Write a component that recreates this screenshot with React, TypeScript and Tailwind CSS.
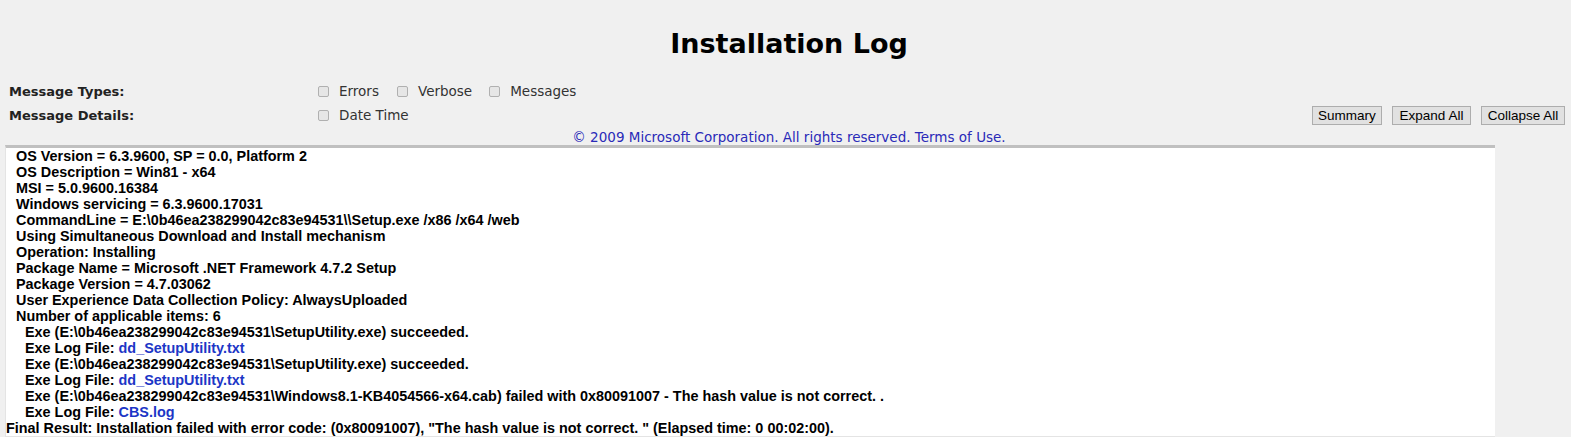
import React from "react";

const Box = ({ label, gapAfter = "" }: { label: string; gapAfter?: string }) => (
  <span className={`flex items-center ${gapAfter}`}>
    <span className="inline-block w-[11px] h-[11px] rounded-[2px] border border-[#b0b0b0] bg-[#e6e6e6] mr-[10px]" />
    <span className="text-[#333]">{label}</span>
  </span>
);

type Line = { level: number; text: string; link?: string };

const lines: Line[] = [
  { level: 1, text: "OS Version = 6.3.9600, SP = 0.0, Platform 2" },
  { level: 1, text: "OS Description = Win81 - x64" },
  { level: 1, text: "MSI = 5.0.9600.16384" },
  { level: 1, text: "Windows servicing = 6.3.9600.17031" },
  { level: 1, text: "CommandLine = E:\\0b46ea238299042c83e94531\\\\Setup.exe /x86 /x64 /web" },
  { level: 1, text: "Using Simultaneous Download and Install mechanism" },
  { level: 1, text: "Operation: Installing" },
  { level: 1, text: "Package Name = Microsoft .NET Framework 4.7.2 Setup" },
  { level: 1, text: "Package Version = 4.7.03062" },
  { level: 1, text: "User Experience Data Collection Policy: AlwaysUploaded" },
  { level: 1, text: "Number of applicable items: 6" },
  { level: 2, text: "Exe (E:\\0b46ea238299042c83e94531\\SetupUtility.exe) succeeded." },
  { level: 2, text: "Exe Log File: ", link: "dd_SetupUtility.txt" },
  { level: 2, text: "Exe (E:\\0b46ea238299042c83e94531\\SetupUtility.exe) succeeded." },
  { level: 2, text: "Exe Log File: ", link: "dd_SetupUtility.txt" },
  { level: 2, text: "Exe (E:\\0b46ea238299042c83e94531\\Windows8.1-KB4054566-x64.cab) failed with 0x80091007 - The hash value is not correct. ." },
  { level: 2, text: "Exe Log File: ", link: "CBS.log" },
  { level: 0, text: "Final Result: Installation failed with error code: (0x80091007), \"The hash value is not correct. \" (Elapsed time: 0 00:02:00)." },
];

export default function App() {
  return (
    <div className="w-[1571px] h-[437px] overflow-hidden bg-[#f0f0f0] font-['Verdana','DejaVu_Sans',sans-serif] text-[13.5px]">
      <h1 className="pt-[24px] pl-[7px] h-[80px] text-center text-[27px] leading-[40px] font-bold text-black">
        Installation Log
      </h1>
      <div className="flex h-[23px] items-center">
        <div className="w-[318px] pl-[9px] font-bold text-[13px] text-[#222]">Message Types:</div>
        <Box label="Errors" gapAfter="mr-[18px]" />
        <Box label="Verbose" gapAfter="mr-[17px]" />
        <Box label="Messages" />
      </div>
      <div className="flex h-[25px] items-center">
        <div className="w-[318px] pl-[9px] font-bold text-[13px] text-[#222]">Message Details:</div>
        <Box label="Date Time" />
        <div className="ml-auto mr-[6px] flex gap-[10px] font-['Liberation_Sans',Arial,sans-serif] text-[13.5px]">
          <button className="h-[19px] w-[70px] border border-[#adadad] bg-[#e1e1e1] leading-[17px] text-black">Summary</button>
          <button className="h-[19px] w-[79px] border border-[#adadad] bg-[#e1e1e1] leading-[17px] text-black">Expand All</button>
          <button className="h-[19px] w-[84px] border border-[#adadad] bg-[#e1e1e1] leading-[17px] text-black">Collapse All</button>
        </div>
      </div>
      <div className="h-[17px] pt-[1px] pl-[7px] text-center leading-[16px] text-[#2a2ab8]">
        © 2009 Microsoft Corporation. All rights reserved. Terms of Use.
      </div>
      <div className="ml-[5px] w-[1490px] h-[292px] border-t-[3px] border-l border-b border-t-[#c0c0c0] border-l-[#e4e4e4] border-b-[#e4e4e4] bg-white font-['Liberation_Sans',Arial,sans-serif] text-[14.4px] font-bold leading-[16px] text-black">
        {lines.map((l, i) => (
          <div
            key={i}
            className={
              l.level === 0 ? "whitespace-pre" : l.level === 1 ? "pl-[10px] whitespace-pre" : "pl-[19px] whitespace-pre"
            }
          >
            {l.text}
            {l.link && <span className="text-[#1c36c6]">{l.link}</span>}
          </div>
        ))}
      </div>
    </div>
  );
}
